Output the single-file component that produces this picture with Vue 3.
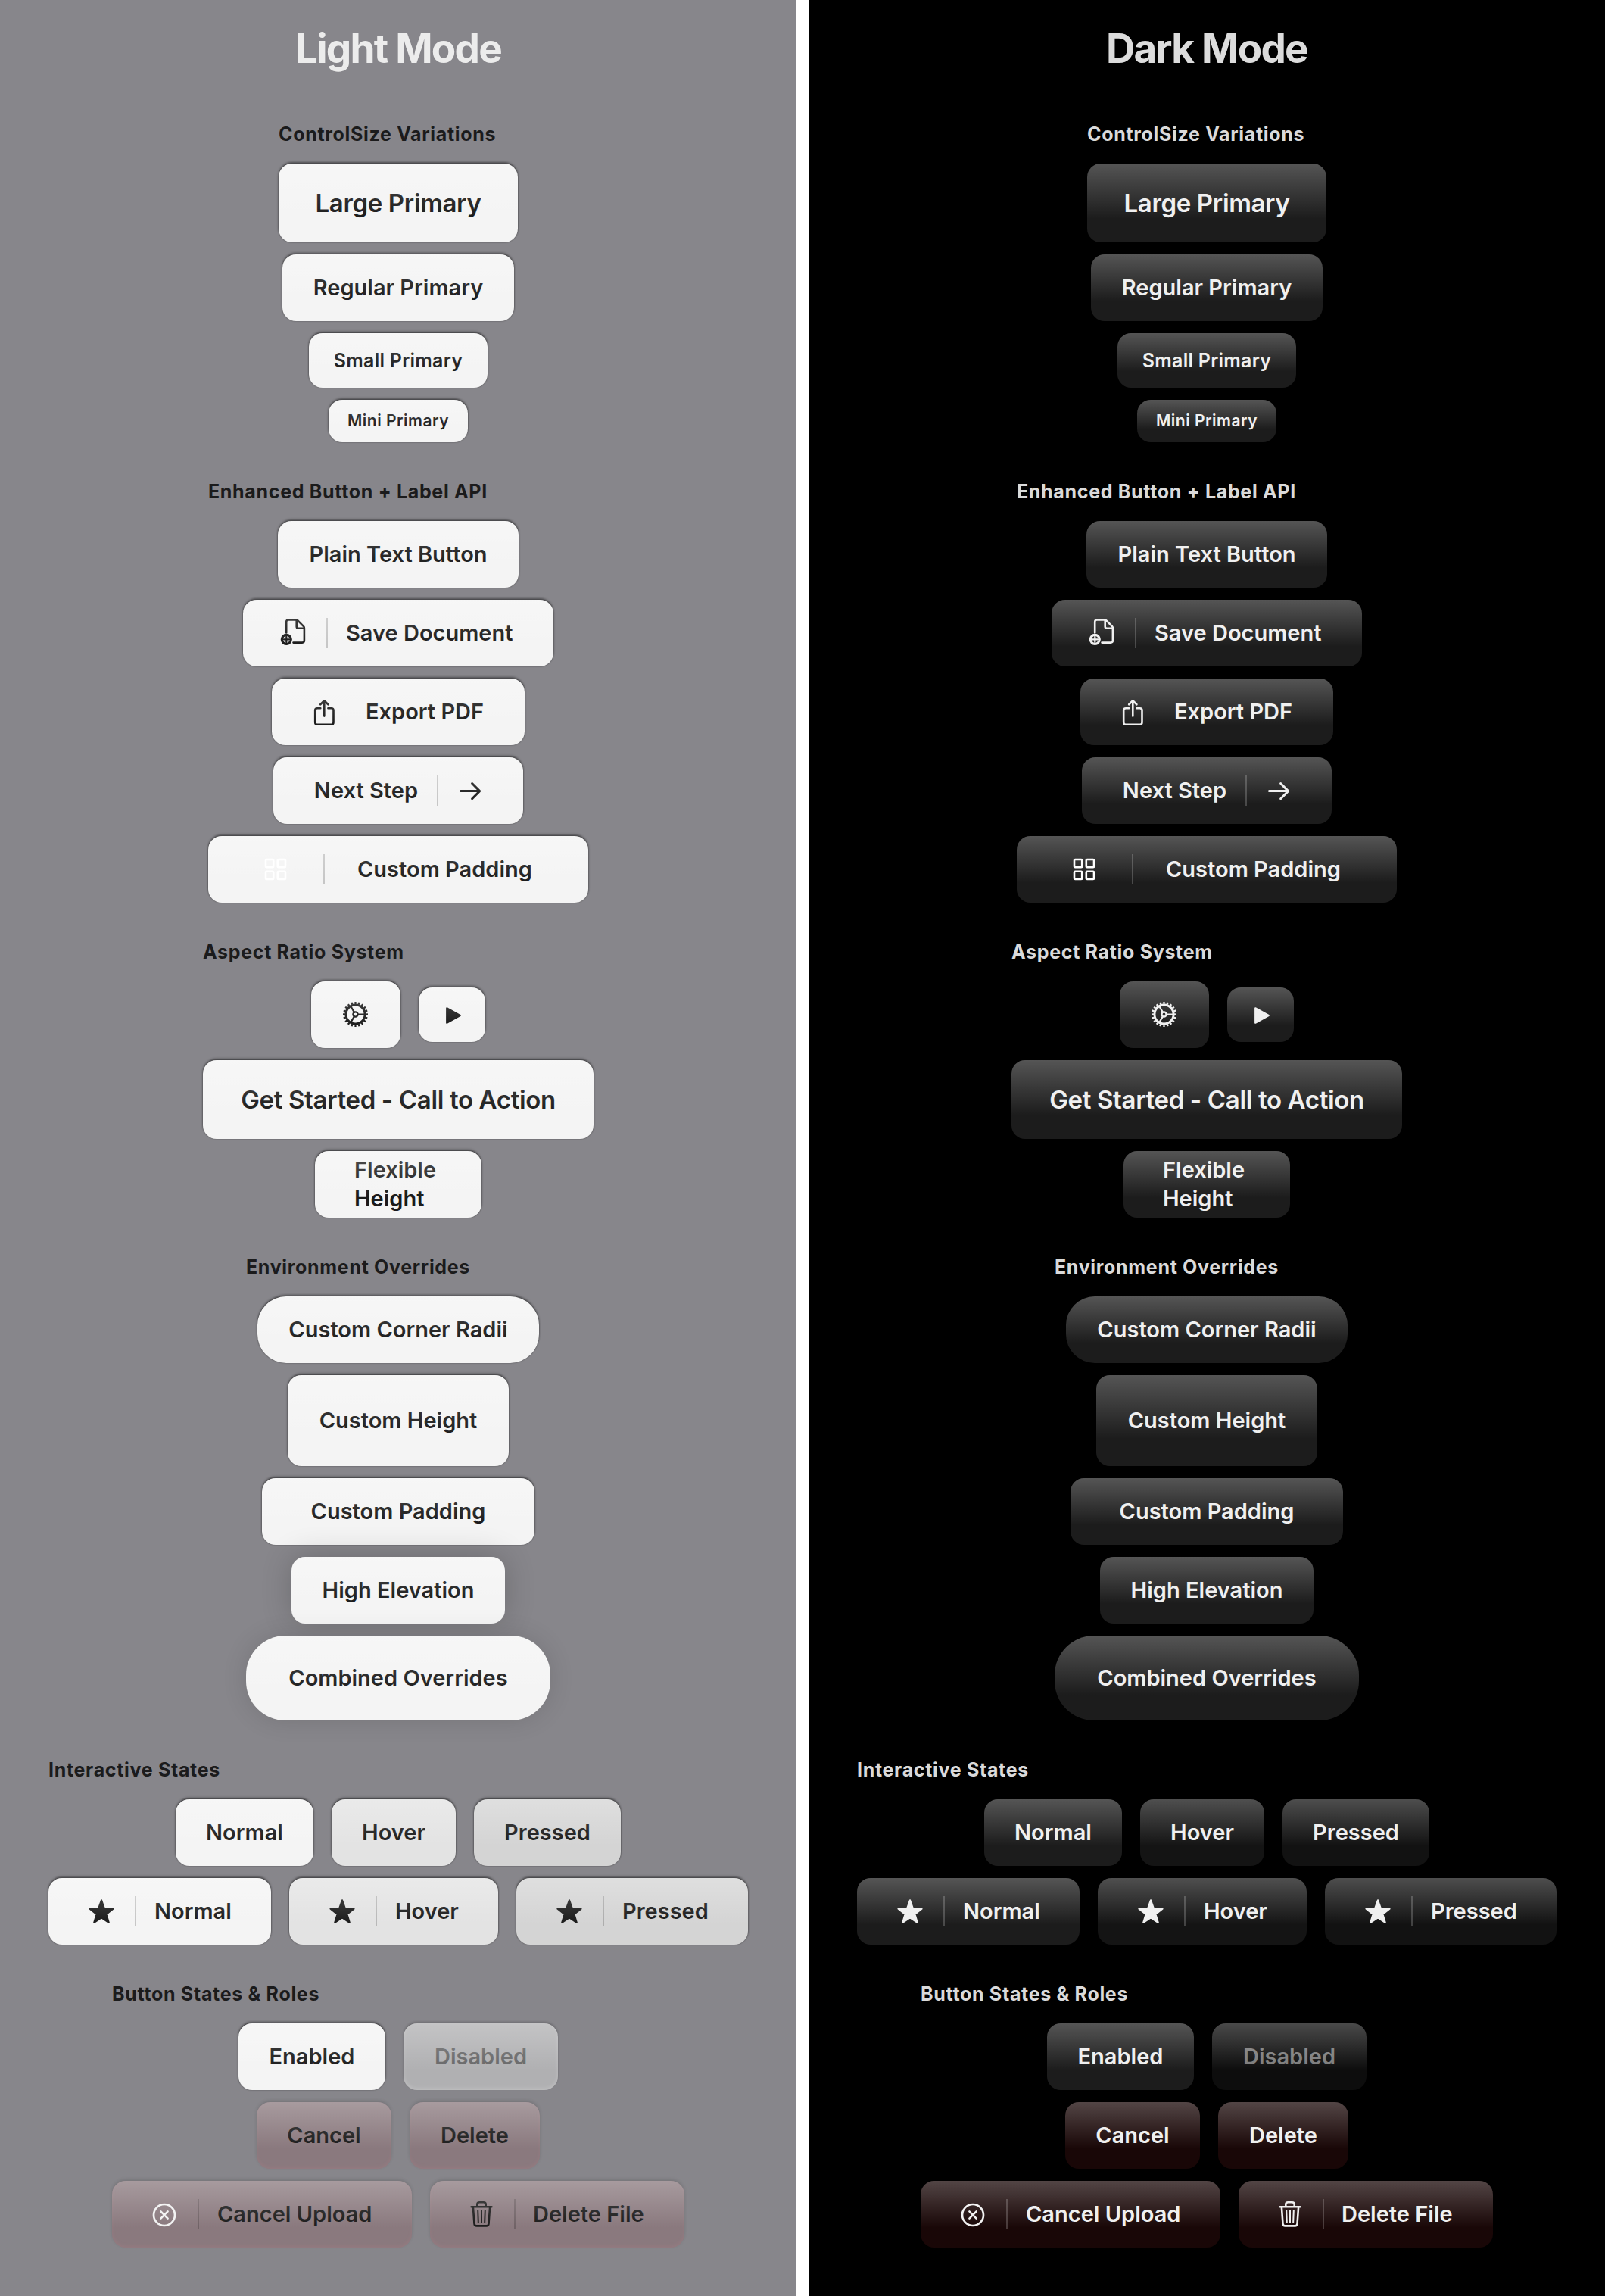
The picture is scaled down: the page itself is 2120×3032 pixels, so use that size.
<script setup>
const panes = [
  { theme: 'light', title: 'Light Mode' },
  { theme: 'dark', title: 'Dark Mode' },
]

// w = button width; size, state, shape and layout map to modifier classes
const sections = [
  {
    title: 'ControlSize Variations',
    width: 316,
    rows: [
      [{ label: 'Large Primary', w: 316, mods: ['large'] }],
      [{ label: 'Regular Primary', w: 306 }],
      [{ label: 'Small Primary', w: 236, mods: ['small'] }],
      [{ label: 'Mini Primary', w: 184, mods: ['mini'] }],
    ],
  },
  {
    title: 'Enhanced Button + Label API',
    width: 502,
    rows: [
      [{ label: 'Plain Text Button', w: 318 }],
      [{ label: 'Save Document', w: 410, icon: 'doc', divider: true, mods: ['lead'] }],
      [{ label: 'Export PDF', w: 334, icon: 'share', mods: ['lead', 'open'] }],
      [{ label: 'Next Step', w: 330, icon: 'arrow', divider: true, mods: ['trail'] }],
      [{ label: 'Custom Padding', w: 502, icon: 'grid', divider: true, mods: ['lead', 'roomy'] }],
    ],
  },
  {
    title: 'Aspect Ratio System',
    width: 516,
    rows: [
      [
        { w: 118, icon: 'gear' },
        { w: 88, icon: 'play', mods: ['small'] },
      ],
      [{ label: 'Get Started - Call to Action', w: 516, mods: ['large'] }],
      [{ label: 'Flexible\nHeight', w: 220, mods: ['flexible'] }],
    ],
  },
  {
    title: 'Environment Overrides',
    width: 402,
    rows: [
      [{ label: 'Custom Corner Radii', w: 372, mods: ['round'] }],
      [{ label: 'Custom Height', w: 292, mods: ['tall'] }],
      [{ label: 'Custom Padding', w: 360 }],
      [{ label: 'High Elevation', w: 282, mods: ['elevated'] }],
      [{ label: 'Combined Overrides', w: 402, mods: ['combined'] }],
    ],
  },
  {
    title: 'Interactive States',
    width: 924,
    rows: [
      [
        { label: 'Normal', w: 182 },
        { label: 'Hover', w: 164, mods: ['hover'] },
        { label: 'Pressed', w: 194, mods: ['pressed'] },
      ],
      [
        { label: 'Normal', w: 294, icon: 'star', divider: true, mods: ['lead', 'starred'] },
        { label: 'Hover', w: 276, icon: 'star', divider: true, mods: ['lead', 'starred', 'hover'] },
        { label: 'Pressed', w: 306, icon: 'star', divider: true, mods: ['lead', 'starred', 'pressed'] },
      ],
    ],
  },
  {
    title: 'Button States & Roles',
    width: 756,
    rows: [
      [
        { label: 'Enabled', w: 194 },
        { label: 'Disabled', w: 204, mods: ['disabled'] },
      ],
      [
        { label: 'Cancel', w: 178, mods: ['danger'] },
        { label: 'Delete', w: 172, mods: ['danger'] },
      ],
      [
        { label: 'Cancel Upload', w: 396, icon: 'cancel', divider: true, mods: ['lead', 'cancelling', 'danger'] },
        { label: 'Delete File', w: 336, icon: 'trash', divider: true, mods: ['lead', 'trashing', 'danger'] },
      ],
    ],
  },
]
</script>

<template>
  <main class="board">
    <div v-for="pane in panes" :key="pane.theme" class="pane" :class="pane.theme">
      <h1 class="title">{{ pane.title }}</h1>
      <section
        v-for="section in sections"
        :key="section.title"
        class="section"
        :style="{ width: section.width + 'px' }"
      >
        <h2 class="heading">{{ section.title }}</h2>
        <div v-for="(row, r) in section.rows" :key="r" class="row">
          <button
            v-for="(b, i) in row"
            :key="i"
            type="button"
            class="btn"
            :class="b.mods"
            :style="{ width: b.w + 'px' }"
          >
            <svg v-if="b.icon" class="icon" :class="'icon-' + b.icon" viewBox="0 0 40 40">
              <g v-if="b.icon === 'doc'" class="line thin">
                <path d="M11.2 19.5V5.2Q11.2 2.5 14 2.5H24.2Q25.4 2.5 26.3 3.4L34 11.2Q34.9 12.1 34.9 13.4V29.8Q34.9 32.6 32.1 32.6H20.5" />
                <path d="M24.7 3V11.6Q24.7 13.8 27 13.8H34.4" />
                <circle cx="11.3" cy="28.3" r="6" stroke-width="3.2" />
                <path d="M11.3 24.5V32.1M7.5 28.3H15.1" stroke-width="2.2" />
              </g>
              <g v-else-if="b.icon === 'share'" class="line thin">
                <path d="M15.3 15.2H11Q8.2 15.2 8.2 18V34Q8.2 36.8 11 36.8H29.7Q32.5 36.8 32.5 34V18Q32.5 15.2 29.7 15.2H25.4" />
                <path d="M20.3 25.6V5.6M15.2 10.3L20.3 5.3L25.4 10.3" />
              </g>
              <path v-else-if="b.icon === 'arrow'" class="line thick" d="M7.5 20.6H32.4M22.6 10.5L32.6 20.6L22.6 30.7" />
              <g v-else-if="b.icon === 'grid'" class="line thin">
                <rect x="7" y="7" width="10.2" height="10.2" rx="1.2" />
                <rect x="22.8" y="7" width="10.2" height="10.2" rx="1.2" />
                <rect x="7" y="22.8" width="10.2" height="10.2" rx="1.2" />
                <rect x="22.8" y="22.8" width="10.2" height="10.2" rx="1.2" />
              </g>
              <g v-else-if="b.icon === 'gear'" class="line thin">
                <circle cx="19.5" cy="19.5" r="12.6" stroke-width="3" />
                <circle
                  cx="19.5" cy="19.5" r="15" pathLength="80" stroke-width="3"
                  stroke-linecap="butt" stroke-dasharray="1.9 2.1" stroke-dashoffset="0.95"
                />
                <circle cx="19.5" cy="19.5" r="3.1" stroke-width="2.4" />
                <path d="M22.8 19.5H31.4M17.8 16.6L13.4 9M17.8 22.4L13.4 30" stroke-width="2.2" />
              </g>
              <path v-else-if="b.icon === 'play'" class="solid" d="M13.2 11.3L30.8 21L13.2 30.7Z" />
              <path
                v-else-if="b.icon === 'star'" class="solid"
                d="M20 5.4L23.9 16.3L35.5 16.7L26.4 23.8L29.7 34.9L20 28.4L10.3 34.9L13.6 23.8L4.5 16.7L16.1 16.3Z"
              />
              <g v-else-if="b.icon === 'cancel'" class="line thin">
                <circle cx="20" cy="21" r="14" stroke-width="2.7" />
                <path d="M15.4 16.4L24.6 25.6M24.6 16.4L15.4 25.6" />
              </g>
              <g v-else-if="b.icon === 'trash'" class="line thin">
                <path d="M6.6 10.2H33.4" />
                <path d="M14.3 9.8V7.2Q14.3 4.3 17.2 4.3H22.8Q25.7 4.3 25.7 7.2V9.8" />
                <path d="M8.9 10.8L10.5 32.6Q10.8 35.4 13.5 35.4H26.5Q29.2 35.4 29.5 32.6L31.1 10.8" />
                <path d="M15.2 15L15.8 30.8M20 15V30.8M24.8 15L24.2 30.8" stroke-width="2" />
              </g>
            </svg>
            <i v-if="b.divider" class="divider"></i>
            <span v-if="b.label" class="label">{{ b.label }}</span>
          </button>
        </div>
      </section>
    </div>
  </main>
</template>

<style>
body {
  margin: 0;
  background: #fff;
}
</style>

<style scoped>
.board {
  display: flex;
  gap: 16px;
  width: 2120px;
  height: 3032px;
  background: #fff;
  font-family: Inter, 'Liberation Sans', sans-serif;
}

.pane {
  flex: 1;
  display: flex;
  flex-direction: column;
  align-items: center;
  gap: 48px;
  overflow: hidden;
}

.light {
  --pane: #87868b;
  --title: #ececec;
  --heading: #1b1b1c;
  --ink: #1a1a1a;
  --fill: #f4f4f4;
  --hover: #e3e3e3;
  --pressed: #d4d4d4;
  --disabled: #b0b0b2;
  --disabled-ink: #676768;
  --danger: #8a797e;
  --rule: rgba(0, 0, 0, 0.19);
  --shadow: 0 -2px 3px rgba(0, 0, 0, 0.42), 0 0 2px rgba(0, 0, 0, 0.4);
  --shadow-soft: 0 -2px 4px rgba(0, 0, 0, 0.13), inset 0 -2px 5px rgba(255, 150, 160, 0.1);
  --shadow-high: 0 -1px 40px rgba(0, 0, 0, 0.2);
  --shadow-combined: 0 0 32px rgba(0, 0, 0, 0.13);
}

.dark {
  --pane: #000;
  --title: #dcdcdc;
  --heading: #dadada;
  --ink: #efefef;
  --fill: #1c1c1c;
  --hover: #141414;
  --pressed: #121212;
  --disabled: #0d0d0d;
  --disabled-ink: #7b7b7b;
  --danger: #190707;
  --rule: rgba(255, 255, 255, 0.2);
  --shadow: none;
  --shadow-soft: none;
  --shadow-high: none;
  --shadow-combined: none;
}

.pane {
  background: var(--pane);
}

.title {
  margin: 0 0 -12px;
  height: 124px;
  line-height: 128px;
  font-size: 53px;
  font-weight: 700;
  letter-spacing: -1.75px;
  color: var(--title);
}

.section {
  display: flex;
  flex-direction: column;
  gap: 16px;
}

.heading {
  margin: 0 0 8px;
  height: 32px;
  line-height: 34px;
  font-size: 25px;
  font-weight: 700;
  letter-spacing: 0.68px;
  white-space: nowrap;
  color: var(--heading);
}

.row {
  display: flex;
  justify-content: center;
  align-items: center;
  gap: 24px;
}

.btn {
  position: relative;
  flex: none;
  display: flex;
  align-items: center;
  justify-content: center;
  height: 88px;
  margin: 0;
  padding: 0;
  border: 0;
  border-radius: 18px;
  background: var(--fill);
  box-shadow: var(--shadow);
  color: var(--ink);
  font: 600 29px/38px Inter, 'Liberation Sans', sans-serif;
}

/* Sheen that fades out over the upper part, above the label */
.btn::after {
  content: '';
  position: absolute;
  inset: 0;
  border-radius: inherit;
  background: linear-gradient(rgba(255, 255, 255, 0.25), rgba(255, 255, 255, 0) 70%);
}

.label {
  white-space: pre;
  text-align: left;
}

.large {
  height: 104px;
  font-size: 33px;
  letter-spacing: -0.35px;
}

.small {
  height: 72px;
  font-size: 25px;
  letter-spacing: 0.25px;
}

.mini {
  height: 56px;
  font-size: 21px;
  letter-spacing: 0.5px;
}

.tall {
  height: 120px;
}

.round {
  border-radius: 38px;
}

.combined {
  height: 112px;
  border-radius: 52px;
  box-shadow: var(--shadow-combined);
}

.elevated {
  box-shadow: var(--shadow-high);
}

.hover {
  background: var(--hover);
}

.pressed {
  background: var(--pressed);
}

.disabled {
  background: var(--disabled);
  color: var(--disabled-ink);
  box-shadow: 0 -2px 3px rgba(0, 0, 0, 0.2), inset 0 -2px 5px rgba(255, 255, 255, 0.2);
}

.dark .disabled {
  box-shadow: none;
}

.danger {
  background: var(--danger);
  box-shadow: var(--shadow-soft);
}

.flexible {
  justify-content: flex-start;
  padding-left: 52px;
}

.icon {
  flex: none;
  width: 40px;
  height: 40px;
}

.divider {
  flex: none;
  width: 2px;
  height: 40px;
  background: var(--rule);
}

.lead {
  justify-content: flex-start;
  gap: 24px;
  padding-left: 46px;
}

.open {
  gap: 35px;
  padding-left: 49px;
}

.roomy {
  gap: 43px;
  padding-left: 69px;
}

.starred {
  padding-left: 50px;
}

.cancelling {
  padding-left: 49px;
}

.trashing {
  gap: 23px;
  padding-left: 48px;
}

.trail {
  flex-direction: row-reverse;
  justify-content: flex-start;
  gap: 22px;
  padding-right: 50px;
}

/* A trailing icon puts the label first, before the divider */
.trail .label {
  margin-right: 3px;
}

.line {
  fill: none;
  stroke: currentColor;
  stroke-linecap: round;
  stroke-linejoin: round;
}

.thin {
  stroke-width: 2.6;
}

.thick {
  stroke-width: 3;
}

.solid {
  fill: currentColor;
  stroke: currentColor;
  stroke-width: 2.2;
  stroke-linejoin: round;
}

.icon-grid {
  color: #fff;
}

.icon-cancel {
  color: #f2f2f2;
}
</style>
